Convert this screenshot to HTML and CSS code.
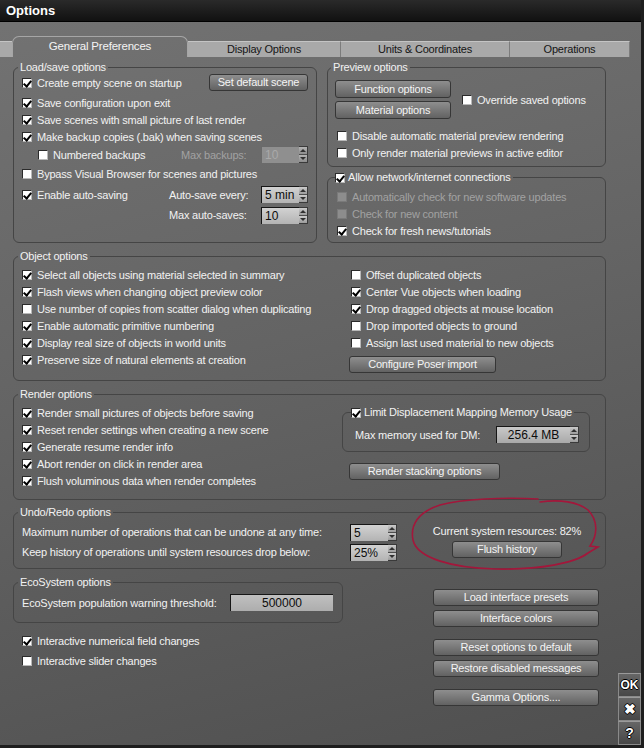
FILE: index.html
```html
<!DOCTYPE html>
<html lang="en">
<head>
<meta charset="UTF-8">
<title>Options</title>
<link rel="stylesheet" href="styles.css">
</head>
<body>
<div class="dialog">
  <div class="titlebar">Options</div>

  <div class="tabs">
    <div class="tab-lead"></div>
    <div class="tab active">General Preferences</div>
    <div class="tab t-display">Display Options</div>
    <div class="tab t-units">Units &amp; Coordinates</div>
    <div class="tab t-ops">Operations</div>
  </div>

  <div class="page">
    <div class="top-row">
      <!-- load / save -->
      <fieldset class="group load">
        <legend>Load/save options</legend>
        <div class="row h17 first">
          <label class="chk"><span class="cb on"></span>Create empty scene on startup</label>
          <button class="btn set-default">Set default scene</button>
        </div>
        <div class="row h17"><label class="chk"><span class="cb on"></span>Save configuration upon exit</label></div>
        <div class="row h17"><label class="chk"><span class="cb on"></span>Save scenes with small picture of last render</label></div>
        <div class="row h17"><label class="chk"><span class="cb on"></span>Make backup copies (.bak) when saving scenes</label></div>
        <div class="row h19">
          <label class="chk indent"><span class="cb"></span>Numbered backups</label>
          <div class="pair">
            <span class="pair-label w80 dim">Max backups:</span>
            <div class="spin dis"><span class="field">10</span><span class="arrows"><i class="up"></i><i class="down"></i></span></div>
          </div>
        </div>
        <div class="row h20"><label class="chk"><span class="cb"></span>Bypass Visual Browser for scenes and pictures</label></div>
        <div class="row h21">
          <label class="chk"><span class="cb on"></span>Enable auto-saving</label>
          <div class="pair">
            <span class="pair-label w92">Auto-save every:</span>
            <div class="spin"><span class="field">5 min</span><span class="arrows"><i class="up"></i><i class="down"></i></span></div>
          </div>
        </div>
        <div class="row h20">
          <div class="pair">
            <span class="pair-label w92">Max auto-saves:</span>
            <div class="spin"><span class="field">10</span><span class="arrows"><i class="up"></i><i class="down"></i></span></div>
          </div>
        </div>
      </fieldset>

      <div class="right-col">
        <!-- preview -->
        <fieldset class="group preview">
          <legend>Preview options</legend>
          <div class="preview-top">
            <div class="btn-stack">
              <button class="btn preview-btn">Function options</button>
              <button class="btn preview-btn">Material options</button>
            </div>
            <label class="chk"><span class="cb"></span>Override saved options</label>
          </div>
          <div class="preview-rows">
            <div class="row h17"><label class="chk"><span class="cb"></span>Disable automatic material preview rendering</label></div>
            <div class="row h17"><label class="chk"><span class="cb"></span>Only render material previews in active editor</label></div>
          </div>
        </fieldset>

        <!-- network -->
        <fieldset class="group network">
          <legend><label class="chk"><span class="cb on"></span>Allow network/internet connections</label></legend>
          <div class="row h17"><label class="chk dim"><span class="cb dis"></span>Automatically check for new software updates</label></div>
          <div class="row h17"><label class="chk dim"><span class="cb dis"></span>Check for new content</label></div>
          <div class="row h17"><label class="chk"><span class="cb on"></span>Check for fresh news/tutorials</label></div>
        </fieldset>
      </div>
    </div>

    <!-- object options -->
    <fieldset class="group objects">
      <legend>Object options</legend>
      <div class="two-col obj-cols">
        <div>
          <div class="row h17"><label class="chk"><span class="cb on"></span>Select all objects using material selected in summary</label></div>
          <div class="row h17"><label class="chk"><span class="cb on"></span>Flash views when changing object preview color</label></div>
          <div class="row h17"><label class="chk"><span class="cb"></span>Use number of copies from scatter dialog when duplicating</label></div>
          <div class="row h17"><label class="chk"><span class="cb on"></span>Enable automatic primitive numbering</label></div>
          <div class="row h17"><label class="chk"><span class="cb on"></span>Display real size of objects in world units</label></div>
          <div class="row h17"><label class="chk"><span class="cb on"></span>Preserve size of natural elements at creation</label></div>
        </div>
        <div>
          <div class="row h17 nudge"><label class="chk"><span class="cb"></span>Offset duplicated objects</label></div>
          <div class="row h17 nudge"><label class="chk"><span class="cb on"></span>Center Vue objects when loading</label></div>
          <div class="row h17 nudge"><label class="chk"><span class="cb on"></span>Drop dragged objects at mouse location</label></div>
          <div class="row h17 nudge"><label class="chk"><span class="cb"></span>Drop imported objects to ground</label></div>
          <div class="row h17 nudge"><label class="chk"><span class="cb"></span>Assign last used material to new objects</label></div>
          <button class="btn poser">Configure Poser import</button>
        </div>
      </div>
    </fieldset>

    <!-- render options -->
    <fieldset class="group render">
      <legend>Render options</legend>
      <div class="two-col render-cols">
        <div>
          <div class="row h17"><label class="chk"><span class="cb on"></span>Render small pictures of objects before saving</label></div>
          <div class="row h17"><label class="chk"><span class="cb on"></span>Reset render settings when creating a new scene</label></div>
          <div class="row h17"><label class="chk"><span class="cb on"></span>Generate resume render info</label></div>
          <div class="row h17"><label class="chk"><span class="cb on"></span>Abort render on click in render area</label></div>
          <div class="row h17"><label class="chk"><span class="cb on"></span>Flush voluminous data when render completes</label></div>
        </div>
        <div>
          <fieldset class="group displace">
            <legend><label class="chk"><span class="cb on"></span>Limit Displacement Mapping Memory Usage</label></legend>
            <div class="row h17">
              <span>Max memory used for DM:</span>
              <div class="spin wide"><span class="field">256.4 MB</span><span class="arrows"><i class="up"></i><i class="down"></i></span></div>
            </div>
          </fieldset>
          <button class="btn stacking">Render stacking options</button>
        </div>
      </div>
    </fieldset>

    <!-- undo / redo -->
    <fieldset class="group undo">
      <legend>Undo/Redo options</legend>
      <div class="undo-grid">
        <span class="undo-label">Maximum number of operations that can be undone at any time:</span>
        <div class="spin"><span class="field">5</span><span class="arrows"><i class="up"></i><i class="down"></i></span></div>
        <div class="resources">
          <span>Current system resources: 82%</span>
          <button class="btn flush">Flush history</button>
        </div>
        <span class="undo-label">Keep history of operations until system resources drop below:</span>
        <div class="spin"><span class="field">25%</span><span class="arrows"><i class="up"></i><i class="down"></i></span></div>
      </div>
    </fieldset>

    <div class="bottom-row">
      <div class="bottom-left">
        <fieldset class="group eco">
          <legend>EcoSystem options</legend>
          <div class="row h17">
            <span class="eco-label">EcoSystem population warning threshold:</span>
            <span class="field eco-field">500000</span>
          </div>
        </fieldset>
        <div class="loose">
          <div class="row h20"><label class="chk"><span class="cb on"></span>Interactive numerical field changes</label></div>
          <div class="row h20"><label class="chk"><span class="cb"></span>Interactive slider changes</label></div>
        </div>
      </div>
      <div class="bottom-buttons">
        <button class="btn wide-btn">Load interface presets</button>
        <button class="btn wide-btn">Interface colors</button>
        <button class="btn wide-btn sep">Reset options to default</button>
        <button class="btn wide-btn">Restore disabled messages</button>
        <button class="btn wide-btn sep">Gamma Options....</button>
      </div>
    </div>
  </div>

  <!-- dialog buttons sit over the page edge -->
  <div class="dlg-buttons">
    <div class="dlg-btn ok">OK</div>
    <div class="dlg-btn">&#10006;</div>
    <div class="dlg-btn">?</div>
  </div>

  <!-- hand drawn mark around the resources -->
  <svg class="scribble" width="644" height="748" viewBox="0 0 644 748">
    <path d="M 538 499 C 505 497 462 499 440 505 C 418 512 410 525 413 540 C 417 558 452 568 495 569 C 540 570 575 563 588 553 L 598 547 L 590 546 C 598 535 598 520 588 510 C 578 502 560 499 540 502"
          fill="none" stroke="#a3173b" stroke-width="1.6" stroke-linecap="round"/>
  </svg>
</div>
</body>
</html>
```

FILE: styles.css
```css
* {
	box-sizing: border-box;
}

body {
	margin: 0;
	width: 644px;
	height: 748px;
	overflow: hidden;
	background: #1c1c1c;
	font-family: "Liberation Sans", Arial, sans-serif;
	font-size: 11px;
	letter-spacing: -0.2px;
	white-space: nowrap;
	color: #f2f2f2;
}

.dialog {
	position: relative;
	width: 644px;
	height: 748px;
	background: linear-gradient(165deg, #737373 0%, #646464 45%, #4f4f4f 100%);
	border-right: 3px solid #1e1e1e;
	border-bottom: 3px solid #1e1e1e;
}

.titlebar {
	height: 22px;
	line-height: 21px;
	padding-left: 6px;
	background: linear-gradient(#2a2a2a, #111);
	border-bottom: 1px solid #000;
	font-weight: bold;
	font-size: 13px;
	letter-spacing: 0;
	color: #fff;
}

/* tabs */
.tabs {
	display: flex;
	align-items: flex-end;
	height: 35px;
}

.tab-lead {
	width: 12px;
	height: 16px;
	background: #a9a9a9;
	border-top: 1px solid #c4c4c4;
}

.tab {
	height: 16px;
	line-height: 15px;
	text-align: center;
	background: #a9a9a9;
	border-top: 1px solid #c4c4c4;
	border-left: 1px solid #7c7c7c;
	color: #151515;
}

.tab.active {
	width: 176px;
	height: 21px;
	line-height: 19px;
	background: transparent;
	border: 1px solid #a6a6a6;
	border-bottom: none;
	border-radius: 7px 7px 0 0;
	color: #f4f4f4;
	font-size: 11.5px;
}

.t-display { width: 152px; border-left: none; }
.t-units { width: 169px; }
.t-ops { width: 121px; border-right: 1px solid #7c7c7c; }

/* page */
.page {
	padding: 4px 24px 0 13px;
	width: 630px;
}

.top-row {
	display: flex;
	gap: 10px;
	align-items: flex-start;
}

.group {
	margin: 0;
	min-width: 0;
	border: 1px solid #454545;
	border-radius: 6px;
	padding: 0;
}

.group legend {
	line-height: 13px;
	padding: 0 2px;
	margin-left: -4px;
}

.row {
	display: flex;
	align-items: center;
}

.h17 { height: 17px; }
.h19 { height: 19px; }
.h20 { height: 20px; }
.h21 { height: 21px; }

.chk {
	display: flex;
	align-items: center;
	gap: 5px;
}

.cb {
	position: relative;
	flex: none;
	width: 10px;
	height: 10px;
	background: #fff;
	border: 1px solid #2b2b2b;
	border-right-color: #b9b9b9;
	border-bottom-color: #b9b9b9;
}

.cb.on::after {
	content: "";
	position: absolute;
	left: 2px;
	top: 0;
	width: 3px;
	height: 6px;
	border: solid #000;
	border-width: 0 2px 2px 0;
	transform: rotate(40deg);
}

.cb.dis {
	background: #8d8d8d;
	border-color: #7a7a7a;
}

.dim {
	color: #a2a2a2;
}

/* buttons */
.btn {
	height: 17px;
	padding: 0;
	border: 1px solid #363636;
	border-radius: 3px;
	background: linear-gradient(#8e8e8e, #626262);
	color: #f4f4f4;
	font: inherit;
	letter-spacing: inherit;
	line-height: 15px;
	text-align: center;
}

/* numeric fields */
.spin {
	display: flex;
	flex: none;
}

.field {
	display: block;
	width: 38px;
	height: 17px;
	padding-left: 3px;
	line-height: 16px;
	background: linear-gradient(#d2d2d2, #b3b3b3);
	border-top: 1px solid #161616;
	border-left: 1px solid #161616;
	color: #0c0c0c;
	font-size: 12px;
	letter-spacing: 0;
}

.spin.dis .field {
	background: #8f8f8f;
	border-color: #6a6a6a;
	color: #a9a9a9;
}

.arrows {
	display: flex;
	flex-direction: column;
	width: 9px;
	height: 17px;
	border: 1px solid #3a3a3a;
	border-left: none;
}

.arrows i {
	position: relative;
	flex: 1;
	background: linear-gradient(#cbcbcb, #9c9c9c);
	border-bottom: 1px solid #4e4e4e;
}

.arrows i.down {
	border-bottom: none;
}

.arrows i::after {
	content: "";
	position: absolute;
	left: 1px;
	top: 2px;
	border-left: 3px solid transparent;
	border-right: 3px solid transparent;
	border-bottom: 3px solid #303030;
}

.arrows i.down::after {
	border-bottom: none;
	border-top: 3px solid #303030;
}

.spin.dis .arrows i {
	background: linear-gradient(#b4b4b4, #8c8c8c);
}

/* load / save */
.load {
	width: 304px;
	padding: 3px 8px 17px 8px;
}

.load .first {
	align-items: flex-start;
}

.set-default {
	width: 99px;
	margin-left: auto;
	margin-top: -3px;
}

.indent {
	margin-left: 16px;
}

.pair {
	display: flex;
	align-items: center;
	margin-left: auto;
}

.pair-label.w80 { width: 80px; }
.pair-label.w92 { width: 92px; }

/* right column */
.right-col {
	width: 279px;
}

.preview {
	padding: 6px 9px 5px 7px;
}

.preview-top {
	display: flex;
	align-items: center;
	gap: 11px;
}

.btn-stack {
	display: flex;
	flex-direction: column;
	gap: 3px;
}

.preview-btn {
	width: 116px;
	height: 18px;
	line-height: 16px;
}

.preview-rows {
	margin-top: 8px;
	padding-left: 2px;
}

.network {
	margin-top: 4px;
	padding: 4px 9px 3px 9px;
}

.network legend {
	padding: 0 2px 0 0;
	margin-left: -2px;
}

.network legend .chk,
.displace legend .chk {
	gap: 3px;
}

/* object + render */
.objects {
	margin-top: 7px;
	padding: 3px 8px 7px 8px;
}

.two-col {
	display: grid;
}

.obj-cols {
	grid-template-columns: 327px 1fr;
}

.nudge {
	padding-left: 2px;
}

.poser {
	width: 147px;
	margin-top: 5px;
}

.render {
	margin-top: 7px;
	padding: 3px 8px 10px 8px;
}

.render-cols {
	grid-template-columns: 320px 1fr;
}

.displace {
	width: 248px;
	margin-top: 2px;
	padding: 7px 10px 8px 12px;
}

.displace legend {
	padding: 0 2px 0 0;
	margin-left: -4px;
}

.spin.wide .field {
	width: 74px;
	text-align: center;
	padding-left: 0;
	background: linear-gradient(#c9c9c9, #a9a9a9);
}

.displace .spin {
	margin-left: auto;
}

.stacking {
	width: 151px;
	margin: 11px 0 0 7px;
}

/* undo */
.undo {
	margin-top: 6px;
	padding: 3px 8px 6px 8px;
}

.undo-grid {
	display: grid;
	grid-template-columns: 328px 47px 1fr;
	grid-template-rows: 20px 20px;
	align-items: center;
}

.resources {
	grid-row: 1 / 3;
	grid-column: 3;
	align-self: start;
	display: flex;
	flex-direction: column;
	align-items: center;
	width: 190px;
	margin-left: 15px;
	padding-top: 2px;
	line-height: 14px;
}

.flush {
	width: 110px;
	margin-top: 3px;
}

/* bottom */
.bottom-row {
	display: flex;
	align-items: flex-start;
	gap: 90px;
	margin-top: 7px;
}

.bottom-left {
	width: 330px;
}

.eco {
	padding: 5px 9px 11px 8px;
}

.eco-label {
	width: 208px;
}

.field.eco-field {
	width: 103px;
	text-align: center;
	padding-left: 0;
	background: linear-gradient(#c0c0c0, #adadad);
}

.loose {
	margin-top: 8px;
	padding-left: 9px;
}

.bottom-buttons {
	display: flex;
	flex-direction: column;
	gap: 4px;
	margin-top: 13px;
}

.wide-btn {
	width: 166px;
}

.wide-btn.sep {
	margin-top: 8px;
}

/* dialog buttons */
.dlg-buttons {
	position: absolute;
	left: 618px;
	top: 673px;
	width: 23px;
	display: flex;
	flex-direction: column;
}

.dlg-btn {
	height: 24px;
	line-height: 22px;
	text-align: center;
	background: linear-gradient(#666, #474747);
	border: 1px solid #8a8a8a;
	border-top-color: #9a9a9a;
	font-weight: bold;
	font-size: 14px;
	letter-spacing: 0;
	color: #fff;
	text-shadow: -1px 0 #000, 1px 0 #000, 0 -1px #000, 0 1px #000;
}

.dlg-btn.ok {
	font-size: 12px;
}

.scribble {
	position: absolute;
	left: 0;
	top: 0;
	pointer-events: none;
}
```
